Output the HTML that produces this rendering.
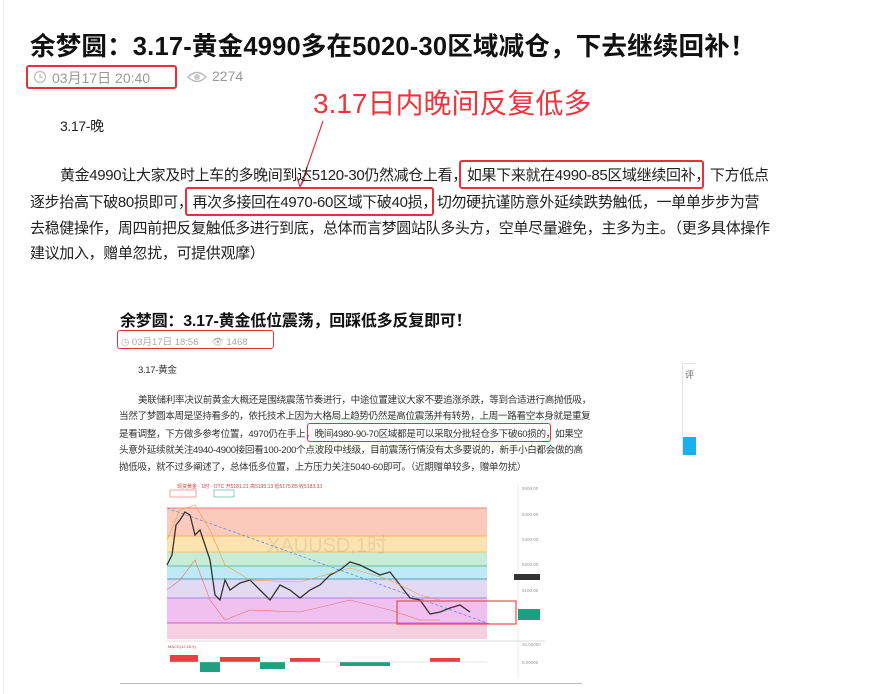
<!DOCTYPE html>
<html><head><meta charset="utf-8"><style>
*{margin:0;padding:0;box-sizing:border-box}
body{width:869px;height:694px;overflow:hidden;background:#fff;font-family:"Liberation Sans","Noto Sans CJK SC",sans-serif;color:#222;position:relative}
.a{position:absolute;white-space:nowrap}
.box{position:absolute;border:2px solid #e8303a;border-radius:3px}
.p{font-size:15px;color:#222;letter-spacing:-0.35px}
.s{font-size:9.6px;color:#333;letter-spacing:-0.35px}
</style></head><body>
<div class="a" style="left:3px;top:0;width:1px;height:694px;background:#eee"></div>
<div class="a" style="left:30px;top:26px;font-size:25.5px;font-weight:bold;color:#111;letter-spacing:0.2px">余梦圆：3.17-黄金4990多在5020-30区域减仓，下去继续回补！</div>
<div class="box" style="left:26px;top:65px;width:151px;height:24px"></div>
<svg class="a" style="left:33px;top:70px" width="14" height="14" viewBox="0 0 14 14"><circle cx="7" cy="7" r="5.5" fill="none" stroke="#bbb" stroke-width="1.2"/><path d="M7 4v3.3h2.5" fill="none" stroke="#bbb" stroke-width="1.2"/></svg>
<div class="a" style="left:52px;top:68px;font-size:14px;color:#999">03月17日 20:40</div>
<svg class="a" style="left:187px;top:70px" width="20" height="14" viewBox="0 0 20 14"><path d="M1 7Q10 -2 19 7Q10 16 1 7Z" fill="none" stroke="#bbb" stroke-width="1.4"/><circle cx="10" cy="7" r="3" fill="#ccc"/></svg>
<div class="a" style="left:212px;top:68px;font-size:14px;color:#999">2274</div>
<div class="a" style="left:313px;top:82px;font-size:28px;color:#f0343c">3.17日内晚间反复低多</div>
<svg class="a" style="left:290px;top:115px" width="40" height="80"><line x1="33" y1="6" x2="11" y2="70" stroke="#e8303a" stroke-width="1.2"/><path d="M7 62L10 72L15 63" fill="none" stroke="#e8303a" stroke-width="1.2"/></svg>
<div class="a p" style="left:60px;top:116px;font-size:14px">3.17-晚</div>
<div class="a p" style="left:60px;top:164px">黄金4990让大家及时上车的多晚间到达5120-30仍然减仓上看，如果下来就在4990-85区域继续回补，下方低点</div>
<div class="a p" style="left:30px;top:191px">逐步抬高下破80损即可，再次多接回在4970-60区域下破40损，切勿硬抗谨防意外延续跌势触低，一单单步步为营</div>
<div class="a p" style="left:30px;top:217px">去稳健操作，周四前把反复触低多进行到底，总体而言梦圆站队多头方，空单尽量避免，主多为主。（更多具体操作</div>
<div class="a p" style="left:30px;top:242px">建议加入，赠单忽扰，可提供观摩）</div>
<div class="box" style="left:459px;top:160px;width:245px;height:29px"></div>
<div class="box" style="left:185px;top:187px;width:249px;height:29px"></div>

<div class="a" style="left:120px;top:307px;font-size:16px;font-weight:bold;color:#111;letter-spacing:-0.2px">余梦圆：3.17-黄金低位震荡，回踩低多反复即可！</div>
<div class="box" style="left:117px;top:330px;width:157px;height:19px;border-width:1.5px"></div>
<div class="a" style="left:121px;top:334px;font-size:9.5px;color:#aaa">◷ 03月17日 18:56 &nbsp; &nbsp; 👁 1468</div>
<div class="a s" style="left:138px;top:362px">3.17-黄金</div>
<div class="a s" style="left:138px;top:392px">美联储利率决议前黄金大概还是围绕震荡节奏进行，中途位置建议大家不要追涨杀跌，等到合适进行高抛低吸，</div>
<div class="a s" style="left:119px;top:408px">当然了梦圆本周是坚持看多的，依托技术上因为大格局上趋势仍然是高位震荡并有转势，上周一路看空本身就是重复</div>
<div class="a s" style="left:119px;top:426px">是看调整，下方做多参考位置，4970仍在手上，晚间4980-90-70区域都是可以采取分批轻仓多下破60损的，如果空</div>
<div class="a s" style="left:119px;top:442px">头意外延续就关注4940-4900接回看100-200个点波段中线级，目前震荡行情没有太多要说的，新手小白都会做的高</div>
<div class="a s" style="left:119px;top:459px">抛低吸，就不过多阐述了，总体低多位置，上方压力关注5040-60即可。（近期赠单较多，赠单勿扰）</div>
<div class="box" style="left:307px;top:423px;width:244px;height:19px;border-width:1.5px"></div>
<div class="a" style="left:682px;top:363px;width:14px;height:92px;border:1px solid #e4e4e4;border-right:none;background:#fff"></div>
<div class="a" style="left:683px;top:437px;width:13px;height:18px;background:#1ab0ee"></div>
<div class="a" style="left:685px;top:368px;font-size:9px;color:#666">评</div>

<svg class="a" style="left:160px;top:478px" width="390" height="200" viewBox="160 478 390 200">
<rect x="160" y="478" width="390" height="200" fill="#fff"/>
<text x="177" y="488" font-size="5" fill="#c44">现货黄金 · 1时 · OTC  开5181.21 高5195.13 低5175.85 收5183.33</text>
<rect x="170" y="490" width="26" height="7" fill="none" stroke="#e66" stroke-width=".6"/>
<rect x="214" y="490" width="20" height="7" fill="none" stroke="#4a9" stroke-width=".6"/>
<rect x="167" y="508" width="320" height="28" fill="#fccabb"/>
<rect x="167" y="536" width="320" height="16" fill="#fde3b0"/>
<rect x="167" y="552" width="320" height="14" fill="#c9ecd6"/>
<rect x="167" y="566" width="320" height="13" fill="#bfe9f5"/>
<rect x="167" y="579" width="320" height="19" fill="#e2d9f5"/>
<rect x="167" y="598" width="320" height="25" fill="#f0c0ee"/>
<rect x="167" y="623" width="320" height="16" fill="#f6cfe0"/>
<line x1="167" y1="508" x2="487" y2="508" stroke="#f08080" stroke-width="1"/>
<line x1="167" y1="536" x2="487" y2="536" stroke="#f5b060"/>
<line x1="167" y1="552" x2="487" y2="552" stroke="#f0c070"/>
<line x1="167" y1="566" x2="487" y2="566" stroke="#60c0a0"/>
<line x1="167" y1="579" x2="487" y2="579" stroke="#50a0c0"/>
<line x1="167" y1="598" x2="487" y2="598" stroke="#b080e0"/>
<line x1="167" y1="623" x2="487" y2="623" stroke="#d060d0"/>
<text x="267" y="552" font-size="20" fill="#000" opacity=".08">XAUUSD,1时</text>
<line x1="167" y1="508" x2="490" y2="624" stroke="#6688ee" stroke-width=".8" stroke-dasharray="3 2"/>
<polyline fill="none" stroke="#333" stroke-width="1.3" points="167,565 172,555 176,525 180,520 185,512 190,515 195,535 200,530 205,545 210,560 215,595 220,600 225,580 230,590 240,583 250,580 260,590 270,600 280,585 290,590 300,598 310,590 320,585 330,575 340,570 350,562 360,565 370,570 380,575 390,572 400,585 410,598 420,600 430,614 440,612 450,608 460,605 470,612"/>
<polyline fill="none" stroke="#e8a040" stroke-width=".6" points="167,540 180,510 195,505 210,530 225,565 250,580 300,582 350,568 390,580 420,595 440,600"/>
<polyline fill="none" stroke="#e07070" stroke-width=".6" points="167,590 180,580 195,560 210,600 225,620 250,610 300,612 350,600 390,610 420,620 440,620"/>
<rect x="397" y="601" width="119" height="23" fill="none" stroke="#e85050" stroke-width="1.2"/>
<line x1="518" y1="485" x2="518" y2="680" stroke="#ddd" stroke-width=".5"/>
<rect x="514" y="574" width="26" height="6" fill="#333"/>
<rect x="518" y="609" width="22" height="11" fill="#1aa080"/>
<g font-size="4.5" fill="#999"><text x="522" y="490">5500.00</text><text x="522" y="516">5400.00</text><text x="522" y="541">5300.00</text><text x="522" y="566">5200.00</text><text x="522" y="592">5100.00</text><text x="522" y="646">10.00000</text><text x="522" y="664">0.00000</text></g>
<line x1="167" y1="641" x2="545" y2="641" stroke="#ddd"/>
<text x="168" y="648" font-size="4" fill="#c44">MACD(12,26,9)</text>
<g fill="#e84040"><rect x="170" y="655" width="28" height="7"/><rect x="220" y="657" width="40" height="5"/><rect x="290" y="658" width="30" height="4"/><rect x="430" y="658" width="30" height="4"/></g>
<g fill="#20a080"><rect x="200" y="662" width="20" height="10"/><rect x="260" y="662" width="25" height="7"/><rect x="340" y="662" width="50" height="4"/></g>
<line x1="167" y1="662" x2="487" y2="662" stroke="#ccc" stroke-width=".5"/>
</svg>
<div class="a" style="left:120px;top:683px;width:462px;height:1px;background:#bbb"></div>
</body></html>
